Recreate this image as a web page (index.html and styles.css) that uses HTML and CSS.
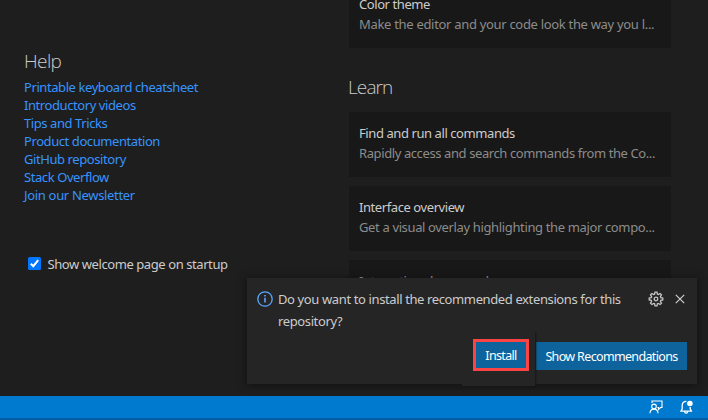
FILE: index.html
```html
<!DOCTYPE html>
<html lang="en">
<head>
<meta charset="utf-8">
<title>Welcome</title>
<link rel="stylesheet" href="styles.css">
</head>
<body>
<div class="window">
  <main class="welcome">
    <section class="left">
      <h2>Help</h2>
      <ul class="links">
        <li><a>Printable keyboard cheatsheet</a></li>
        <li><a>Introductory videos</a></li>
        <li><a>Tips and Tricks</a></li>
        <li><a>Product documentation</a></li>
        <li><a>GitHub repository</a></li>
        <li><a>Stack Overflow</a></li>
        <li><a class="newsletter">Join our Newsletter</a></li>
      </ul>
      <div class="startup">
        <svg class="check" viewBox="0 0 13 13"><rect width="13" height="13" rx="1.5" fill="#0075ff"/><path d="M2.8 6.7 5.3 9.2 10.2 3.2" fill="none" stroke="#fff" stroke-width="2"/></svg>
        <span>Show welcome page on startup</span>
      </div>
    </section>
    <section class="right">
      <div class="card"><h3>Color theme</h3><p class="d1">Make the editor and your code look the way you l...</p></div>
      <h2 class="learn">Learn</h2>
      <div class="card"><h3>Find and run all commands</h3><p class="d2">Rapidly access and search commands from the Co...</p></div>
      <div class="card"><h3>Interface overview</h3><p class="d3">Get a visual overlay highlighting the major compo...</p></div>
      <div class="card"><h3>Interactive playground</h3></div>
    </section>
  </main>
  <footer class="status">
    <svg class="feedback" viewBox="0 0 16 16" fill="none" stroke="#fff" stroke-width="1.1"><path d="M4 4V2H14V8.5H12.5L10.5 10.5V8.5H9.5"/><circle cx="6" cy="7.4" r="2.3"/><path d="M2 14.3C2 8.7 10 8.7 10 14.3"/></svg>
    <svg class="bell" viewBox="0 0 16 16"><path d="M8.4 2.4C5.6 2.4 4.2 4.3 4.2 6.8V9.8L3 12.2H13.4L12.2 9.8V8M6.6 12.4C6.6 14.6 9.7 14.6 9.7 12.4" fill="none" stroke="#fff" stroke-width="1.3"/><circle cx="11.9" cy="4.5" r="2.8" fill="#fff"/></svg>
  </footer>
  <aside class="toast">
    <div class="message">
      <svg class="info" viewBox="0 0 16 16"><circle cx="8" cy="8" r="7.2" fill="none" stroke="#58a8ff" stroke-width="1.3"/><path d="M7.2 4h1.6v1.5H7.2zM7.2 6.8h1.6v4.7H7.2z" fill="#58a8ff"/></svg>
      <p>Do you want to install the recommended extensions for this<br>repository?</p>
      <svg class="gear" viewBox="0 0 16 16" fill="none" stroke="#c5c5c5" stroke-width="1.3"><path d="M6.6 3.2 7 1.2H9L9.4 3.2 10.4 3.6 12.1 2.5 13.5 3.9 12.4 5.6 12.8 6.6 14.8 7V9L12.8 9.4 12.4 10.4 13.5 12.1 12.1 13.5 10.4 12.4 9.4 12.8 9 14.8H7L6.6 12.8 5.6 12.4 3.9 13.5 2.5 12.1 3.6 10.4 3.2 9.4 1.2 9V7L3.2 6.6 3.6 5.6 2.5 3.9 3.9 2.5 5.6 3.6Z"/><circle cx="8" cy="8" r="1.8"/></svg>
      <svg class="close" viewBox="0 0 16 16"><path d="M3.8 3.8 12.2 12.2M12.2 3.8 3.8 12.2" stroke="#d0d0d0" stroke-width="1.2"/></svg>
    </div>
    <div class="actions">
      <div class="install-area"><button class="install">Install</button></div>
      <button class="recommend">Show Recommendations</button>
    </div>
  </aside>
</div>
</body>
</html>
```
FILE: styles.css
```css
* { box-sizing: border-box; }
body, h2, h3, p, ul { margin: 0; padding: 0; }
body {
  background: #1e1e1e;
  color: #ccc;
  font: 13px/18px "Noto Sans", "Open Sans", sans-serif;
  letter-spacing: -0.42px;
  overflow: hidden;
}
svg { display: block; flex: none; }
.window { position: relative; display: flex; flex-direction: column; width: 708px; height: 420px; overflow: hidden; }
.welcome { display: flex; height: 396px; overflow: hidden; }
.left { width: 349px; padding: 48px 0 0 24px; }
h2 { font: 300 19px/26px "Open Sans", "Noto Sans", sans-serif; letter-spacing: -0.6px; }
.links { list-style: none; margin-top: 4px; color: #3794ff; white-space: nowrap; }
.newsletter { letter-spacing: -0.32px; }
.startup { display: flex; align-items: center; gap: 6.5px; margin: 51px 0 0 4px; white-space: nowrap; }
.check { width: 13px; height: 13px; margin-top: -1px; }
.right { width: 322px; margin-top: -17px; }
.card { height: 65px; margin-bottom: 9px; padding: 12px 10px 0; background: #181818; white-space: nowrap; }
h3 { font-size: 13px; line-height: 18px; font-weight: 400; }
.card p { margin-top: 2px; color: #8c8c8c; }
.card .d1 { letter-spacing: -0.31px; }
.card .d2 { letter-spacing: -0.4px; }
.card .d3 { letter-spacing: -0.36px; }
.learn { margin: 26px 0 12px -1px; letter-spacing: -0.9px; }
.status { display: flex; align-items: center; justify-content: flex-end; gap: 14px; height: 24px; padding: 0 14px 0 0; background: #007acf; border-bottom: 2px solid #065ca6; }
.status svg { width: 16px; height: 16px; }
.toast { position: absolute; left: 247px; top: 278px; width: 450px; height: 106px; padding: 10px 9px 0 10px; background: #252526; box-shadow: 0 1px 7px 1px #131313; }
.message { display: flex; height: 54px; }
.message p { width: 375px; padding-left: 5px; line-height: 22px; letter-spacing: -0.38px; white-space: nowrap; }
.message svg { width: 16px; height: 16px; margin-top: 3px; }
.close.close { margin-left: 8px; }
.actions { display: flex; justify-content: flex-end; height: 44px; margin: -11px 1px 0 0; }
.install-area { width: 73px; height: 55px; padding: 8px 0 0 11px; background: #252526; box-shadow: 1px 1px 2px #171717; clip-path: inset(0 -3px -3px 0); }
button { height: 28px; border: 0; padding: 1px 0 0; background: #0e639c; color: #fff; font: inherit; font-size: 12.5px; letter-spacing: -0.65px; white-space: nowrap; }
.install { display: block; width: 56px; height: 32px; padding-top: 2px; border: 3px solid #fb4545; }
.recommend { width: 151px; margin: 11px 0 0 1px; }
```
